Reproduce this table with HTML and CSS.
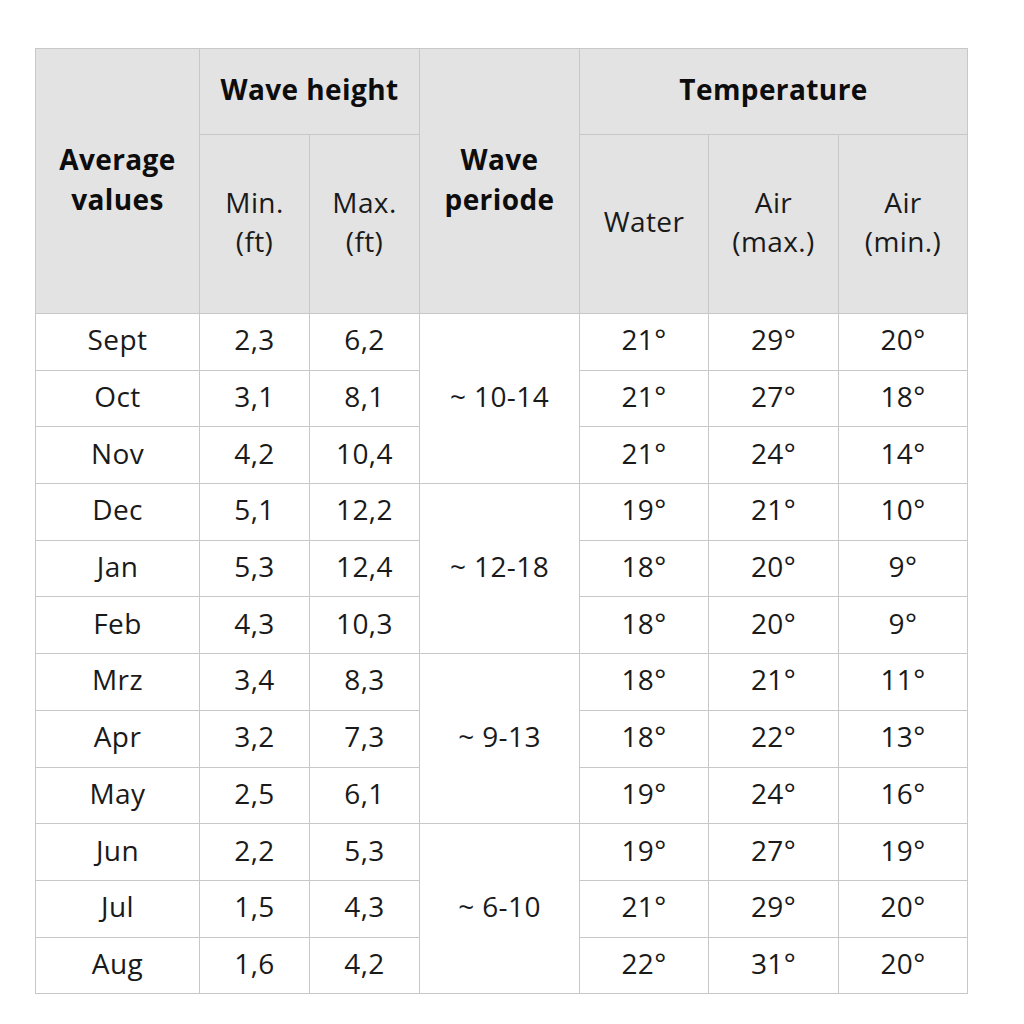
FILE: index.html
```html
<!DOCTYPE html>
<html lang="en">
<head>
<meta charset="utf-8">
<title>Average values</title>
<link rel="stylesheet" href="styles.css">
</head>
<body>
<table class="surf">
  <colgroup>
    <col class="c-month">
    <col class="c-min">
    <col class="c-max">
    <col class="c-period">
    <col class="c-water">
    <col class="c-airmax">
    <col class="c-airmin">
  </colgroup>
  <thead>
    <tr class="h1">
      <th rowspan="2" class="bold">Average<br>values</th>
      <th colspan="2" class="bold">Wave height</th>
      <th rowspan="2" class="bold">Wave<br>periode</th>
      <th colspan="3" class="bold">Temperature</th>
    </tr>
    <tr class="h2">
      <th>Min.<br>(ft)</th>
      <th>Max.<br>(ft)</th>
      <th>Water</th>
      <th>Air<br>(max.)</th>
      <th>Air<br>(min.)</th>
    </tr>
  </thead>
  <tbody>
    <tr><td>Sept</td><td>2,3</td><td>6,2</td><td rowspan="3">~ 10-14</td><td>21°</td><td>29°</td><td>20°</td></tr>
    <tr><td>Oct</td><td>3,1</td><td>8,1</td><td>21°</td><td>27°</td><td>18°</td></tr>
    <tr><td>Nov</td><td>4,2</td><td>10,4</td><td>21°</td><td>24°</td><td>14°</td></tr>
    <tr><td>Dec</td><td>5,1</td><td>12,2</td><td rowspan="3">~ 12-18</td><td>19°</td><td>21°</td><td>10°</td></tr>
    <tr><td>Jan</td><td>5,3</td><td>12,4</td><td>18°</td><td>20°</td><td>9°</td></tr>
    <tr><td>Feb</td><td>4,3</td><td>10,3</td><td>18°</td><td>20°</td><td>9°</td></tr>
    <tr><td>Mrz</td><td>3,4</td><td>8,3</td><td rowspan="3">~ 9-13</td><td>18°</td><td>21°</td><td>11°</td></tr>
    <tr><td>Apr</td><td>3,2</td><td>7,3</td><td>18°</td><td>22°</td><td>13°</td></tr>
    <tr><td>May</td><td>2,5</td><td>6,1</td><td>19°</td><td>24°</td><td>16°</td></tr>
    <tr><td>Jun</td><td>2,2</td><td>5,3</td><td rowspan="3">~ 6-10</td><td>19°</td><td>27°</td><td>19°</td></tr>
    <tr><td>Jul</td><td>1,5</td><td>4,3</td><td>21°</td><td>29°</td><td>20°</td></tr>
    <tr><td>Aug</td><td>1,6</td><td>4,2</td><td>22°</td><td>31°</td><td>20°</td></tr>
  </tbody>
</table>
</body>
</html>
```
FILE: styles.css
```css
html, body {
  margin: 0;
  padding: 0;
  background: #ffffff;
}

body {
  padding: 48px 0 0 35px;
  font-family: "Open Sans", "Liberation Sans", sans-serif;
  color: #151515;
}

.surf {
  border-collapse: collapse;
  table-layout: fixed;
  width: 932px;
}

.c-month { width: 164px; }
.c-min { width: 110px; }
.c-max { width: 110px; }
.c-period { width: 160px; }
.c-water { width: 129px; }
.c-airmax { width: 130px; }
.c-airmin { width: 129px; }

.surf th,
.surf td {
  border: 1.5px solid #c8c8c8;
  text-align: center;
  vertical-align: middle;
  padding: 0 0 5px 0;
  font-size: 28px;
  letter-spacing: 0.4px;
}

.surf th {
  background: #e3e3e3;
  font-weight: 400;
  line-height: 39px;
  color: #1a1a1a;
}

.surf th.bold {
  font-weight: 700;
  color: #0d0d0d;
  line-height: 40px;
}

.h1 { height: 86px; }
.h2 { height: 179px; }

.surf tbody tr { height: 56.7px; }

.surf td {
  line-height: 30px;
  color: #1a1a1a;
}
```
